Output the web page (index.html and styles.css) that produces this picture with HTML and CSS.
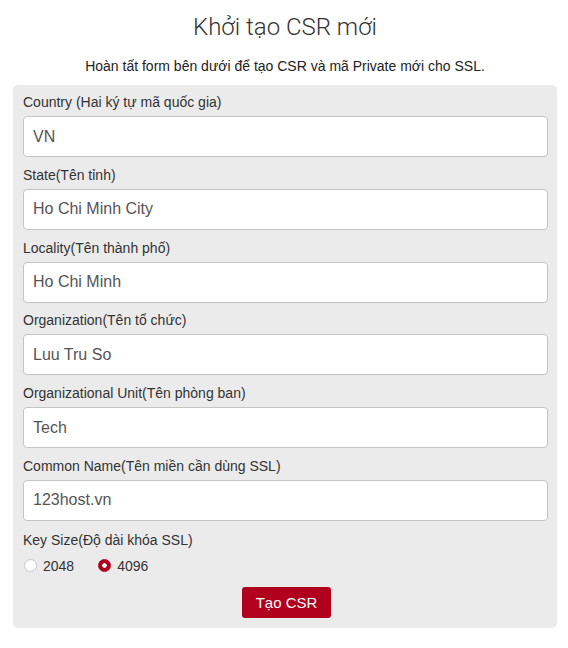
FILE: index.html
```html
<!DOCTYPE html>
<html lang="vi">
<head>
<meta charset="utf-8">
<link rel="stylesheet" href="styles.css">
</head>
<body>
<div class="page">
  <h1 class="title">Khởi tạo CSR mới</h1>
  <p class="subtitle">Hoàn tất form bên dưới để tạo CSR và mã Private mới cho SSL.</p>
  <form class="panel">
    <div class="group">
      <label class="label">Country (Hai ký tự mã quốc gia)</label>
      <input class="input" type="text" value="VN">
    </div>
    <div class="group">
      <label class="label">State(Tên tỉnh)</label>
      <input class="input" type="text" value="Ho Chi Minh City">
    </div>
    <div class="group">
      <label class="label">Locality(Tên thành phố)</label>
      <input class="input" type="text" value="Ho Chi Minh">
    </div>
    <div class="group">
      <label class="label">Organization(Tên tổ chức)</label>
      <input class="input" type="text" value="Luu Tru So">
    </div>
    <div class="group">
      <label class="label">Organizational Unit(Tên phòng ban)</label>
      <input class="input" type="text" value="Tech">
    </div>
    <div class="group">
      <label class="label">Common Name(Tên miền cần dùng SSL)</label>
      <input class="input" type="text" value="123host.vn">
    </div>
    <div class="group keysize">
      <label class="label">Key Size(Độ dài khóa SSL)</label>
      <div class="radios">
        <label class="radio"><input type="radio" name="ks" value="2048"><span>2048</span></label>
        <label class="radio"><input type="radio" name="ks" value="4096" checked><span>4096</span></label>
      </div>
    </div>
    <div class="actions">
      <button class="btn" type="button">Tạo CSR</button>
    </div>
  </form>
</div>
</body>
</html>
```

FILE: styles.css
```css
* { box-sizing: border-box; }
html, body { margin: 0; padding: 0; background: #fff; }
body {
  font-family: "Liberation Sans", Arial, Helvetica, sans-serif;
  color: #333;
  font-size: 14px;
}
.page {
  padding: 12px 11px 0 13px;
}
.title {
  margin: 0;
  font-family: Roboto, "Liberation Sans", sans-serif;
  font-weight: 300;
  font-size: 24px;
  line-height: 30px;
  text-align: center;
  color: #333;
}
.subtitle {
  margin: 14px 0 9px;
  font-size: 14px;
  line-height: 20px;
  text-align: center;
  color: #222;
}
.panel {
  background: #ebebeb;
  border-radius: 5px;
  padding: 7px 9px 10px 10px;
  display: flex;
  flex-direction: column;
}
.group {
  display: flex;
  flex-direction: column;
  margin-bottom: 7.8px;
}
.label {
  font-size: 14px;
  line-height: 20px;
  margin-bottom: 4px;
  color: #333;
}
.input {
  height: 41px;
  border: 1px solid #c4c4c4;
  border-radius: 4px;
  background: #fff;
  padding: 0 9px;
  font-family: "Liberation Sans", Arial, sans-serif;
  font-size: 16px;
  color: #555;
  outline: none;
}
.keysize { margin-top: 1px; margin-bottom: 0; }
.radios {
  display: flex;
  align-items: center;
  gap: 24px;
  height: 20px;
  margin-top: 2px;
  margin-left: 1px;
}
.radio {
  display: flex;
  align-items: center;
  gap: 6px;
  font-size: 14px;
  color: #333;
}
.radio input {
  appearance: none;
  -webkit-appearance: none;
  margin: 0;
  width: 13px;
  height: 13px;
  border-radius: 50%;
  border: 1px solid #c8c8c8;
  background: #fff;
}
.radio input:checked {
  border-color: #b0001e;
  background: radial-gradient(circle, #fff 0 2px, #b0001e 2.5px);
}
.actions {
  display: flex;
  justify-content: center;
  margin-top: 11px;
}
.btn {
  width: 89px;
  height: 31px;
  border: none;
  border-radius: 3px;
  background: #b0001e;
  color: #fff;
  font-family: "Liberation Sans", Arial, sans-serif;
  font-size: 15px;
  padding: 0;
  margin-left: 2px;
}
```
